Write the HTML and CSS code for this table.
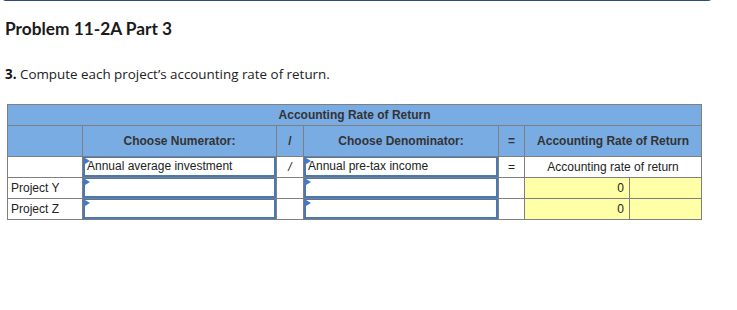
FILE: index.html
```html
<!DOCTYPE html>
<html>
<head>
<meta charset="utf-8">
<link rel="stylesheet" href="styles.css">
</head>
<body>
<div class="topbox"></div>
<h1 class="title">Problem 11-2A Part 3</h1>
<p class="prompt"><b>3.</b> Compute each project’s accounting rate of return.</p>
<table class="arr">
  <colgroup>
    <col class="c1"><col class="c2"><col class="c3"><col class="c4"><col class="c5"><col class="c6"><col class="c7">
  </colgroup>
  <tr class="hrow1"><th colspan="7">Accounting Rate of Return</th></tr>
  <tr class="hrow2"><th></th><th>Choose Numerator:</th><th>/</th><th>Choose Denominator:</th><th>=</th><th colspan="2">Accounting Rate of Return</th></tr>
  <tr class="row">
    <td class="white"></td>
    <td class="inp"><div class="box">Annual average investment</div></td>
    <td class="op"><i>/</i></td>
    <td class="inp"><div class="box">Annual pre-tax income</div></td>
    <td class="op">=</td>
    <td colspan="2" class="center">Accounting rate of return</td>
  </tr>
  <tr class="row">
    <td class="label">Project Y</td>
    <td class="inp"><div class="box"></div></td>
    <td class="op"></td>
    <td class="inp"><div class="box"></div></td>
    <td class="op"></td>
    <td class="yellow num">0</td>
    <td class="yellow"></td>
  </tr>
  <tr class="row">
    <td class="label">Project Z</td>
    <td class="inp"><div class="box"></div></td>
    <td class="op"></td>
    <td class="inp"><div class="box"></div></td>
    <td class="op"></td>
    <td class="yellow num">0</td>
    <td class="yellow"></td>
  </tr>
</table>
</body>
</html>
```
FILE: styles.css
```css
html, body { margin: 0; padding: 0; background: #fff; }
body { font-family: "Liberation Sans", Arial, sans-serif; color: #222; }

.topbox {
  width: 712px;
  height: 20px;
  margin-top: -19px;
  margin-left: 1px;
  border: 2px solid #2b4b7c;
  border-top: none;
  border-radius: 0 0 5px 5px;
  box-sizing: border-box;
}

.title {
  font-family: "Lato", sans-serif;
  font-weight: 700;
  font-size: 17.3px;
  color: #1a1a1a;
  margin: 18px 0 0 5px;
  line-height: 20px;
}

.prompt {
  font-family: "Open Sans", sans-serif;
  font-size: 13.4px;
  color: #222;
  margin: 27px 0 0 5px;
  line-height: 16px;
}
.prompt b { font-weight: 700; color: #111; }

.arr {
  border-collapse: collapse;
  table-layout: fixed;
  width: 695px;
  margin: 22px 0 0 7px;
  font-size: 12px;
}
.c1 { width: 75px; }
.c2 { width: 194px; }
.c3 { width: 27px; }
.c4 { width: 195px; }
.c5 { width: 26px; }
.c6 { width: 105px; }
.c7 { width: 72px; }

.arr th, .arr td {
  border: 1px solid #7f7f7f;
  padding: 0;
}
.arr th {
  background: #7aace4;
  color: #333;
  font-weight: 700;
  text-align: center;
}
.hrow1 th { height: 20px; }
.hrow2 th { height: 30px; }
.row td { height: 20px; }

.label { padding-left: 3px !important; color: #222; }
.op { text-align: center; }
.op i { font-style: italic; }
.center { text-align: center; }
.yellow { background: #ffffa8; }
.num { text-align: right; padding-right: 5px !important; }

.inp { position: relative; }
.box {
  position: relative;
  height: 20px;
  box-sizing: border-box;
  border: 2px solid #4c78b2;
  border-top-width: 1px;
  padding-left: 2px;
  line-height: 17px;
  white-space: nowrap;
  overflow: hidden;
}
.box::before {
  content: "";
  position: absolute;
  left: 0;
  top: 0;
  border-top: 3px solid transparent;
  border-bottom: 3px solid transparent;
  border-left: 5px solid #3f78cf;
}
```
